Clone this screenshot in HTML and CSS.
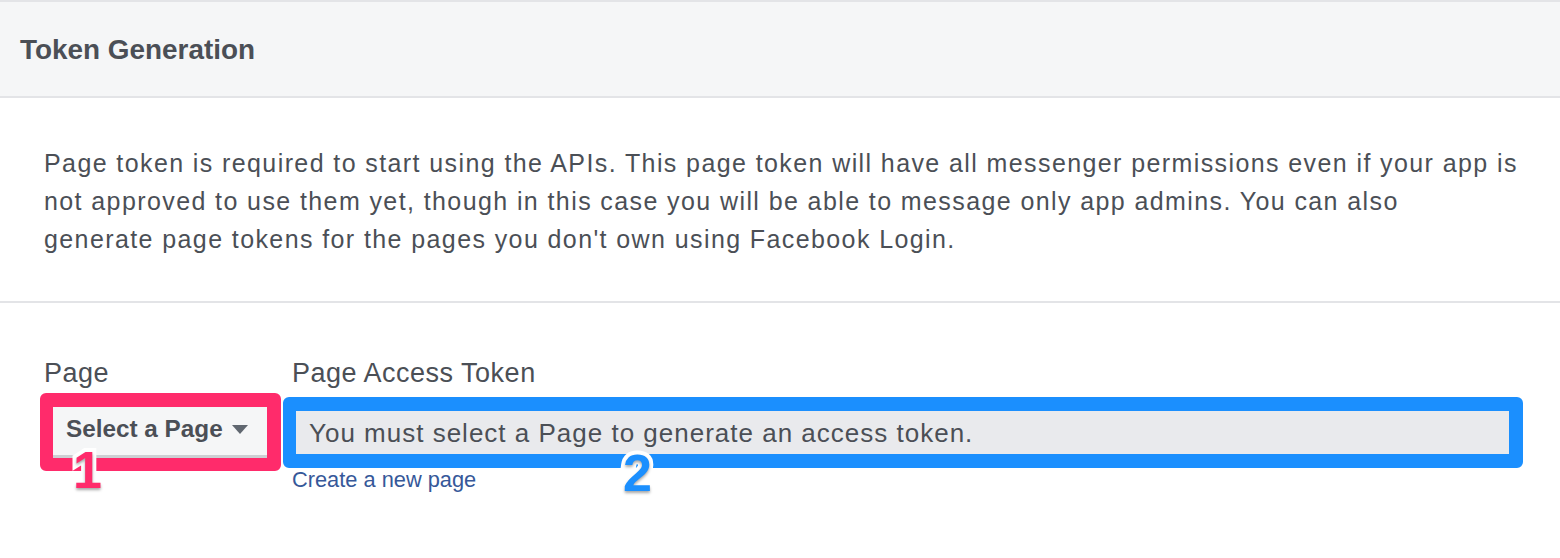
FILE: index.html
```html
<!DOCTYPE html>
<html>
<head>
<meta charset="utf-8">
<link rel="stylesheet" href="styles.css">
</head>
<body>
<div class="panel">
  <div class="panel-header">Token Generation</div>
  <div class="panel-desc">Page token is required to start using the APIs. This page token will have all messenger permissions even if your app is not approved to use them yet, though in this case you will be able to message only app admins. You can also<br>generate page tokens for the pages you don't own using Facebook Login.</div>
  <div class="token-form">
    <div class="field field-page">
      <div class="label">Page</div>
      <div class="mark mark-red">
        <button class="select-btn">Select a Page<span class="caret"></span></button>
        <span class="badge badge-red">1</span>
      </div>
    </div>
    <div class="field field-token">
      <div class="label">Page Access Token</div>
      <div class="mark mark-blue">
        <div class="token-input">You must select a Page to generate an access token.</div>
        <span class="badge badge-blue">2</span>
      </div>
      <a class="create-link" href="#">Create a new page</a>
    </div>
  </div>
</div>
</body>
</html>
```

FILE: styles.css
```css
html, body {
  margin: 0;
  padding: 0;
  background: #ffffff;
}
body {
  font-family: "Liberation Sans", Arial, Helvetica, sans-serif;
  color: #4b4f56;
}
.panel {
  width: 1560px;
  height: 558px;
  overflow: hidden;
}
.panel-header {
  box-sizing: border-box;
  height: 98px;
  background: #f5f6f7;
  border-top: 2px solid #e3e4e7;
  border-bottom: 2px solid #e3e4e7;
  padding: 2px 0 0 20px;
  font-size: 27.9px;
  font-weight: bold;
  line-height: 92px;
  color: #4b4f56;
}
.panel-desc {
  padding: 46px 20px 43px 44px;
  font-size: 25px;
  letter-spacing: 1.4px;
  line-height: 38px;
  border-bottom: 2px solid #e3e4e7;
}
.token-form {
  display: flex;
  align-items: flex-start;
  gap: 2px;
  padding: 55px 0 0 40px;
}
.field {
  display: flex;
  flex-direction: column;
  align-items: flex-start;
}
.label {
  font-size: 27px;
  letter-spacing: 0.5px;
  line-height: 30px;
  height: 35px;
}
.field-page .label {
  padding-left: 4px;
}
.field-token .label {
  padding-left: 9px;
}
.mark {
  position: relative;
  border-radius: 6px;
}
.mark-red {
  border: 13px solid #ff2b6b;
  border-top-width: 14px;
  border-right-width: 14px;
}
.mark-blue {
  margin-top: 4px;
  border: 14px solid #1b8ffe;
  border-left-width: 13px;
}
.select-btn {
  display: flex;
  align-items: center;
  box-sizing: border-box;
  width: 214px;
  height: 51px;
  margin: 0;
  padding: 0 0 5px 13px;
  background: #f5f6f7;
  border: none;
  border-bottom: 3px solid #cdcfd3;
  font-family: "Liberation Sans", Arial, Helvetica, sans-serif;
  font-size: 24.3px;
  font-weight: bold;
  color: #4b4f56;
}
.caret {
  width: 0;
  height: 0;
  margin-left: 9px;
  margin-top: 2px;
  border-left: 8.5px solid transparent;
  border-right: 8.5px solid transparent;
  border-top: 9px solid #606770;
}
.token-input {
  box-sizing: border-box;
  width: 1213px;
  height: 43px;
  background: #e9eaed;
  padding-left: 13px;
  font-size: 26px;
  letter-spacing: 1px;
  line-height: 45px;
  color: #4b4f56;
}
.create-link {
  margin-top: -1px;
  padding-left: 9px;
  font-size: 21.8px;
  line-height: 26px;
  color: #365899;
  text-decoration: none;
}
.badge {
  position: absolute;
  font-family: "Liberation Sans", Arial, sans-serif;
  font-weight: bold;
  font-size: 52px;
  line-height: 1;
  -webkit-text-stroke: 8px #ffffff;
  paint-order: stroke fill;
  text-shadow: 0 2px 3px rgba(0, 0, 0, 0.35);
}
.badge-red {
  color: #ff2b6b;
  left: 20px;
  top: 37px;
}
.badge-blue {
  color: #1b8ffe;
  left: 327px;
  top: 36px;
}
```
